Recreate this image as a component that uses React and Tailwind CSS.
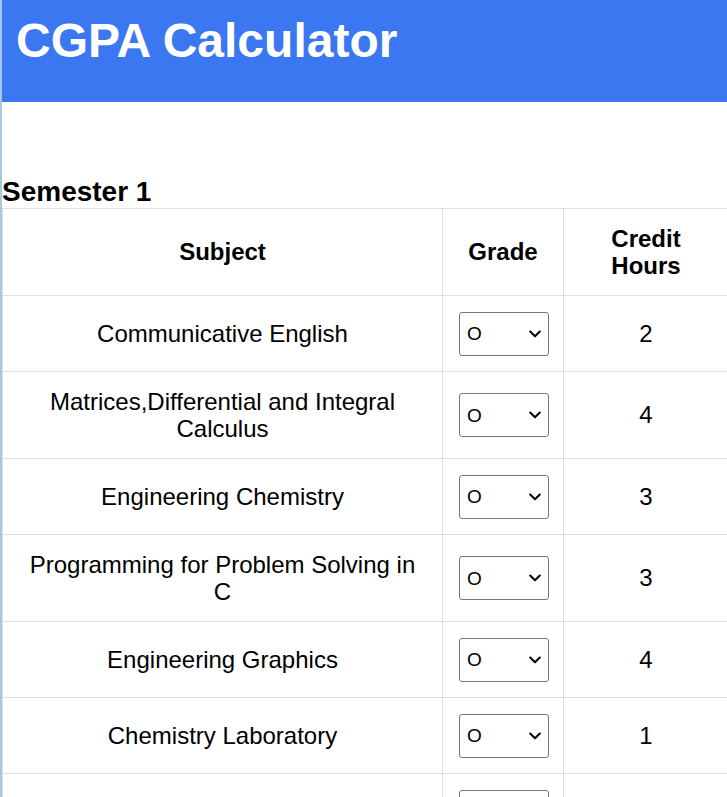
const subjects = [
  { name: "Communicative English", credits: 2 },
  { name: "Matrices,Differential and Integral Calculus", credits: 4 },
  { name: "Engineering Chemistry", credits: 3 },
  { name: "Programming for Problem Solving in C", credits: 3 },
  { name: "Engineering Graphics", credits: 4 },
  { name: "Chemistry Laboratory", credits: 1 },
  { name: "Programming Laboratory", credits: 2 },
];

const grades = ["O", "A+", "A", "B+", "B", "C", "RA"];

function GradeSelect() {
  return (
    <div className="relative inline-block align-middle">
      <select
        defaultValue="O"
        className="block w-[90px] h-[44px] appearance-none rounded-[3px] border border-[#767676] bg-white pl-[7px] text-[19px] leading-[normal] text-black"
      >
        {grades.map((g) => (
          <option key={g} value={g}>
            {g}
          </option>
        ))}
      </select>
      <svg
        className="pointer-events-none absolute right-[8px] top-1/2 -translate-y-1/2"
        width="12"
        height="8"
        viewBox="0 0 12 8"
        fill="none"
      >
        <path d="M1.2 1.5 L6 6.2 L10.8 1.5" stroke="#000" strokeWidth="2" strokeLinecap="round" strokeLinejoin="round" />
      </svg>
    </div>
  );
}

export default function App() {
  return (
    <div className="min-h-screen overflow-x-hidden border-l-2 border-[#a8c8e0] bg-white text-black font-['Liberation_Sans',Arial,sans-serif]">
      <header className="h-[102px] bg-[#3b77f0] pl-[14px] pt-[17px]">
        <h1 className="text-[48px] font-bold leading-none text-white">CGPA Calculator</h1>
      </header>

      <h2 className="mt-[74px] text-[28px] font-bold leading-[32px]">Semester 1</h2>

      <table className="w-[727px] table-fixed border-collapse text-[24px] leading-[27.5px]">
        <thead>
          <tr>
            <th className="w-[440px] border border-[#dddddd] px-4 py-[15.5px] font-bold">Subject</th>
            <th className="w-[121px] border border-[#dddddd] px-4 py-[15.5px] font-bold">Grade</th>
            <th className="border border-[#dddddd] px-4 py-[15.5px] font-bold">Credit Hours</th>
          </tr>
        </thead>
        <tbody>
          {subjects.map((s) => (
            <tr key={s.name}>
              <td className="border border-[#dddddd] px-4 py-[15.5px] text-center">{s.name}</td>
              <td className="border border-[#dddddd] px-4 py-[15.5px] text-center align-middle">
                <GradeSelect />
              </td>
              <td className="border border-[#dddddd] px-4 py-[15.5px] text-center">{s.credits}</td>
            </tr>
          ))}
        </tbody>
      </table>
    </div>
  );
}
